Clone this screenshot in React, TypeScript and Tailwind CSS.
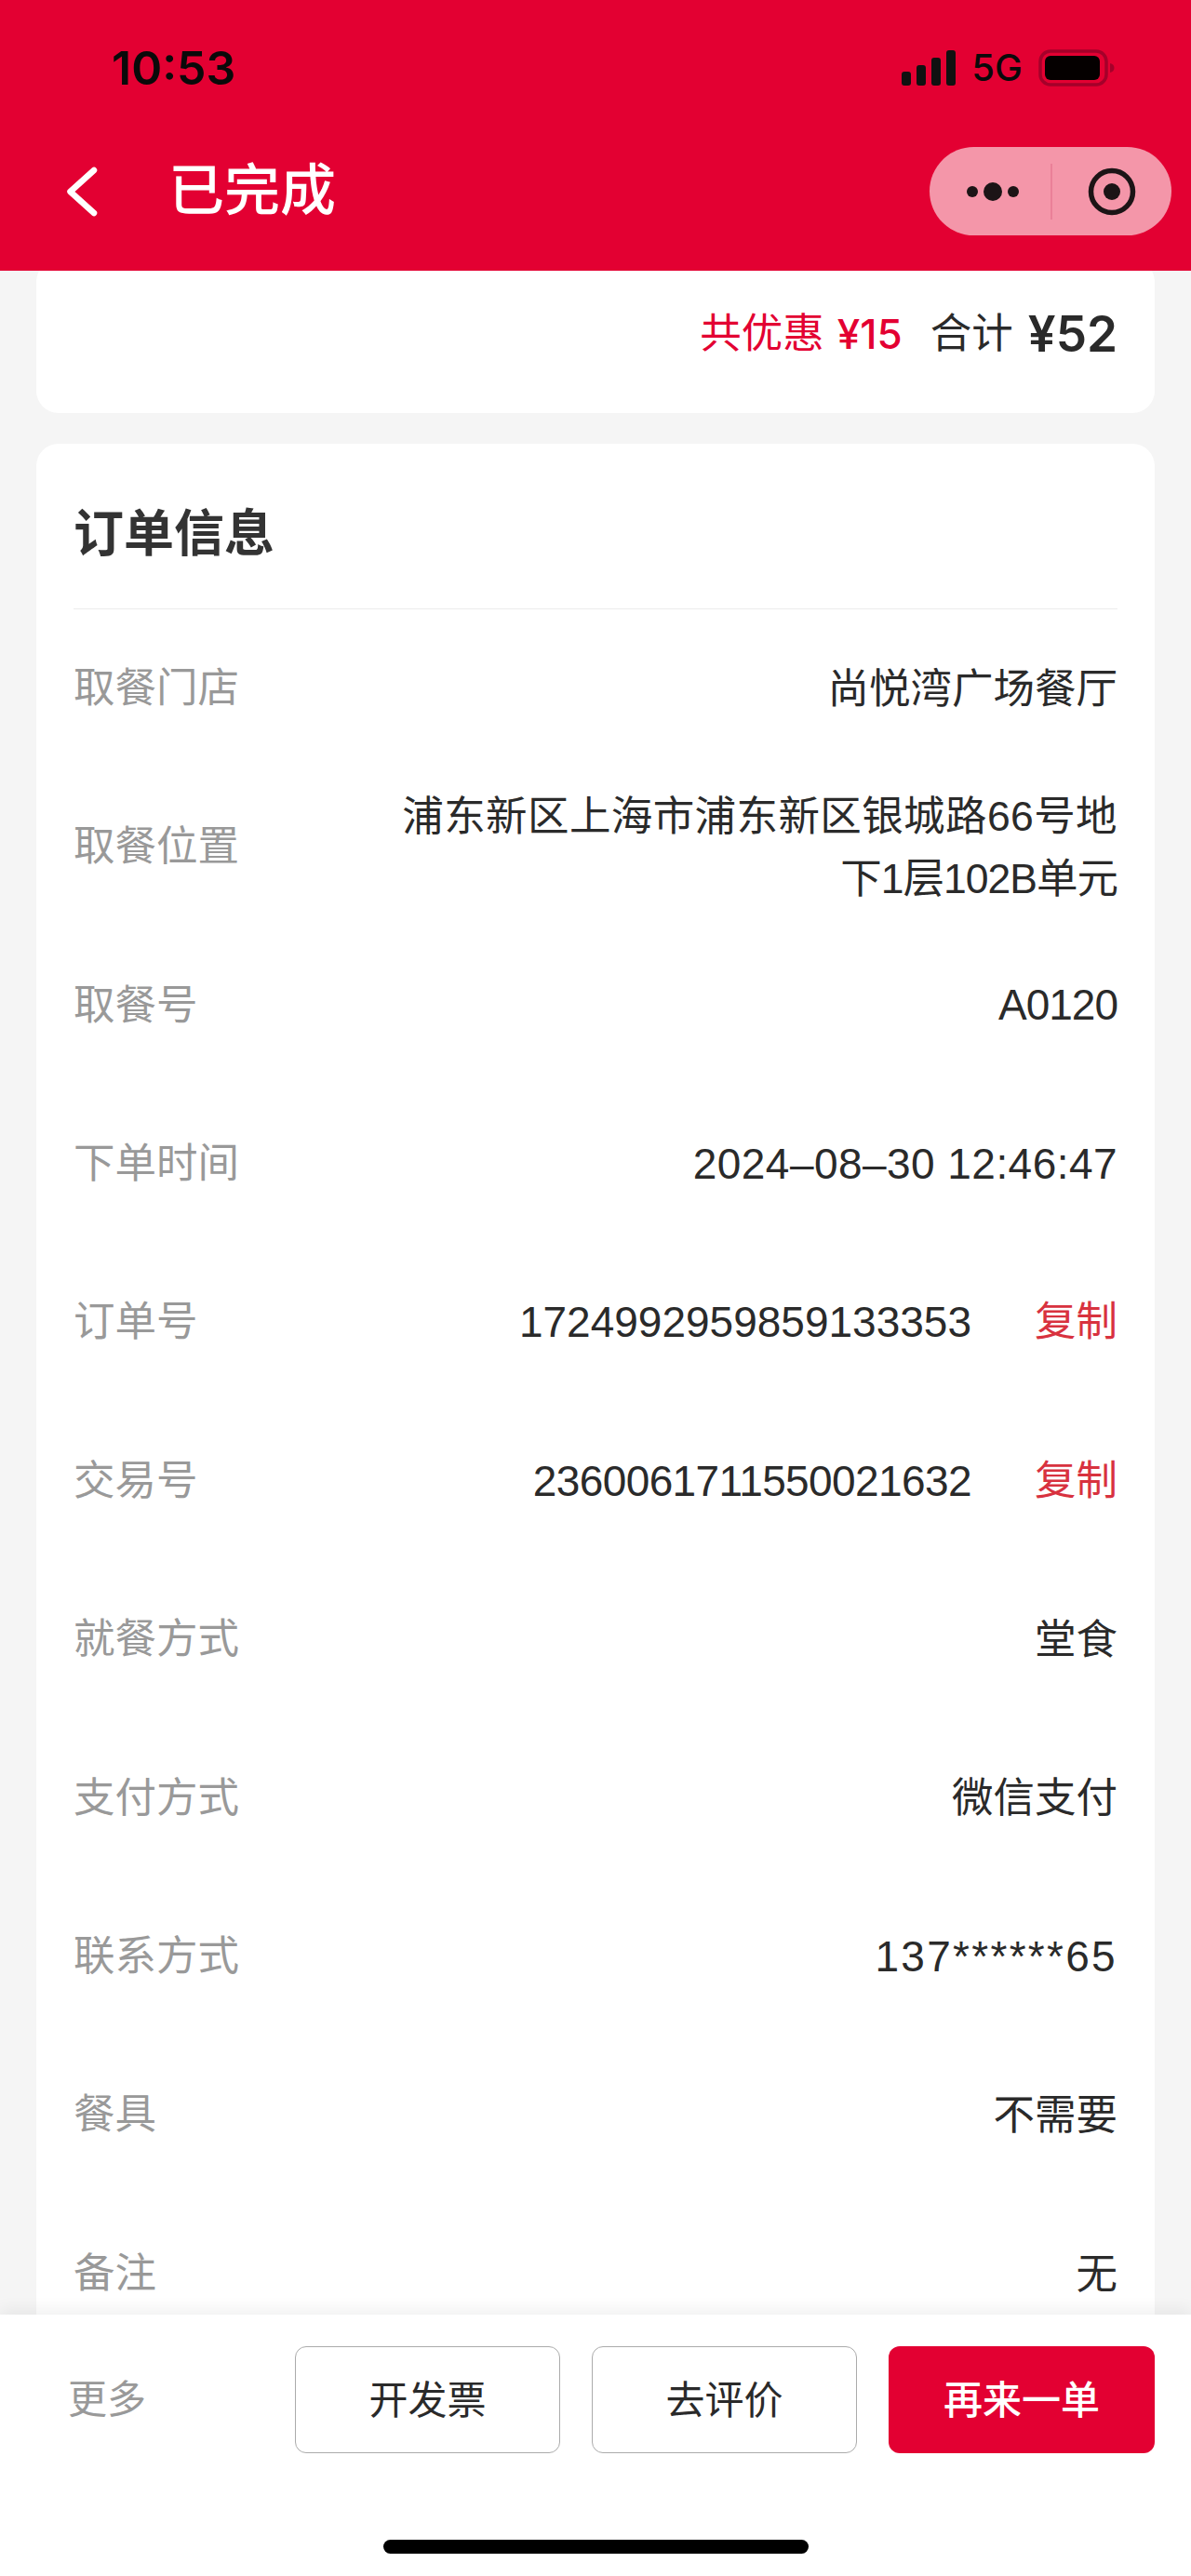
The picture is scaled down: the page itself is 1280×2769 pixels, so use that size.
import React from "react";

type Row = { label: string; value: React.ReactNode; copy?: boolean };

const rows: Row[] = [
  { label: "取餐门店", value: "尚悦湾广场餐厅" },
  {
    label: "取餐位置",
    value: (
      <>
        <span className="block tracking-[0.4px]">浦东新区上海市浦东新区银城路66号地</span>
        <span className="block tracking-[-1px]">下1层102B单元</span>
      </>
    ),
  },
  { label: "取餐号", value: <span className="text-[46px] tracking-[-1px]">A0120</span> },
  { label: "下单时间", value: <span className="text-[46px] tracking-[0.45px]">2024–08–30 12:46:47</span> },
  { label: "订单号", value: <span className="text-[46px]">1724992959859133353</span>, copy: true },
  { label: "交易号", value: <span className="text-[46px] tracking-[-0.6px]">2360061711550021632</span>, copy: true },
  { label: "就餐方式", value: "堂食" },
  { label: "支付方式", value: "微信支付" },
  { label: "联系方式", value: <span className="text-[46px] tracking-[2.3px]">137******65</span> },
  { label: "餐具", value: "不需要" },
  { label: "备注", value: "无" },
];

function InfoRow({ row }: { row: Row }) {
  return (
    <div className="flex h-[170.4px] items-center justify-between">
      <span className="shrink-0 text-[#999999]">{row.label}</span>
      <div className="flex items-center">
        <div className="max-w-[780px] text-right leading-[67px] whitespace-nowrap text-[#2a2a2a]">{row.value}</div>
        {row.copy && <span className="ml-[68px] text-[#d8323f]">复制</span>}
      </div>
    </div>
  );
}

function Signal() {
  return (
    <svg width="58" height="38" viewBox="0 0 58 38" className="block">
      <rect x="0" y="23" width="10" height="15" rx="3" fill="#111" />
      <rect x="16" y="16" width="10" height="22" rx="3" fill="#111" />
      <rect x="32" y="8" width="10" height="30" rx="3" fill="#111" />
      <rect x="48" y="0" width="10" height="38" rx="3" fill="#111" />
    </svg>
  );
}

function Battery() {
  return (
    <svg width="82" height="40" viewBox="0 0 82 40" className="block">
      <rect x="2" y="2" width="71" height="36" rx="11" fill="none" stroke="#a5002a" strokeWidth="3.5" />
      <rect x="7" y="7" width="59" height="26" rx="6" fill="#050000" />
      <path d="M77 15c3 .8 4.5 2.5 4.5 5s-1.500 4.200-4.500 5z" fill="#a5002a" />
    </svg>
  );
}

export default function App() {
  return (
    <div className="flex h-[2769px] w-[1280px] flex-col overflow-hidden bg-[#f5f5f5] text-[44.5px] font-['Liberation_Sans','Noto_Sans_CJK_SC',sans-serif]">
      <header className="relative z-10 h-[291px] shrink-0 bg-[#e30032]">
        <div className="flex h-[146px] items-center justify-between pl-[120px] pr-[82px] text-[#0a0a0a]">
          <span className="text-[50px] font-semibold font-['Inter',sans-serif] leading-none">10:53</span>
          <div className="flex items-center">
            <Signal />
            <span className="ml-[17px] mr-[17px] text-[40px] font-medium font-['Inter',sans-serif] leading-none">5G</span>
            <Battery />
          </div>
        </div>
        <div className="mt-[12px] flex h-[95px] items-center justify-between pl-[70px] pr-[21px]">
          <div className="flex items-center">
            <svg width="36" height="56" viewBox="0 0 36 56" fill="none" className="block">
              <path d="M31 5 L5.500 28 L31 51" stroke="#fff" strokeWidth="6.500" strokeLinecap="round" strokeLinejoin="round" />
            </svg>
            <span className="ml-[75px] text-[60px] font-medium leading-none text-white">已完成</span>
          </div>
          <div className="flex h-[95px] w-[260px] items-center rounded-full bg-[#f496a9]">
            <div className="flex h-full w-[130px] items-center justify-center pl-[8px]">
              <svg width="58" height="22" viewBox="0 0 58 22" className="block">
                <circle cx="6" cy="11" r="6" fill="#1c1416" />
                <circle cx="28" cy="11" r="10" fill="#1c1416" />
                <circle cx="50" cy="11" r="6" fill="#1c1416" />
              </svg>
            </div>
            <div className="h-[60px] w-[2px] bg-[#ea8098]" />
            <div className="flex h-full flex-1 items-center justify-center">
              <svg width="52" height="52" viewBox="0 0 52 52" className="block">
                <circle cx="26" cy="26" r="22.500" fill="none" stroke="#1c1416" strokeWidth="5.500" />
                <circle cx="26" cy="26" r="9" fill="#1c1416" />
              </svg>
            </div>
          </div>
        </div>
      </header>

      <main className="min-h-0 flex-1 overflow-hidden px-[39px]">
        <section className="-mt-[12px] flex h-[165px] items-center justify-end rounded-[24px] bg-white pb-[5px] pr-[40px]">
          <span className="text-[#e30032]">共优惠</span>
          <span className="ml-[14px] font-['Inter',sans-serif] text-[44px] font-medium text-[#e30032]">¥15</span>
          <span className="ml-[30px] text-[#2a2a2a]">合计</span>
          <span className="ml-[16px] font-['Inter',sans-serif] text-[53px] font-semibold leading-none text-[#2a2a2a]">¥52</span>
        </section>

        <section className="mt-[33px] rounded-t-[24px] bg-white px-[40px]">
          <div className="flex h-[178px] items-center border-b border-[#ececec] pt-[18px]">
            <h2 className="text-[54px] font-bold text-[#333333]">订单信息</h2>
          </div>
          {rows.map((r) => (
            <InfoRow key={r.label} row={r} />
          ))}
        </section>
      </main>

      <footer className="relative z-10 flex h-[281px] shrink-0 flex-col bg-white px-[39px] shadow-[0_-6px_16px_rgba(0,0,0,0.06)]">
        <div className="mt-[34px] flex items-center justify-between">
          <span className="pl-[34px] text-[42px] text-[#999999]">更多</span>
          <div className="flex gap-[34px]">
            <button className="flex h-[115px] w-[285px] items-center justify-center rounded-[12px] border-[1.5px] border-[#ababab] pt-[2px] text-[42px] text-[#2a2a2a]">开发票</button>
            <button className="flex h-[115px] w-[285px] items-center justify-center rounded-[12px] border-[1.5px] border-[#ababab] pt-[2px] text-[42px] text-[#2a2a2a]">去评价</button>
            <button className="flex h-[115px] w-[286px] items-center justify-center rounded-[12px] bg-[#e30032] pt-[2px] text-[42px] font-medium text-white">再来一单</button>
          </div>
        </div>
        <div className="mx-auto mt-[93px] h-[15px] w-[457px] rounded-full bg-black" />
      </footer>
    </div>
  );
}
